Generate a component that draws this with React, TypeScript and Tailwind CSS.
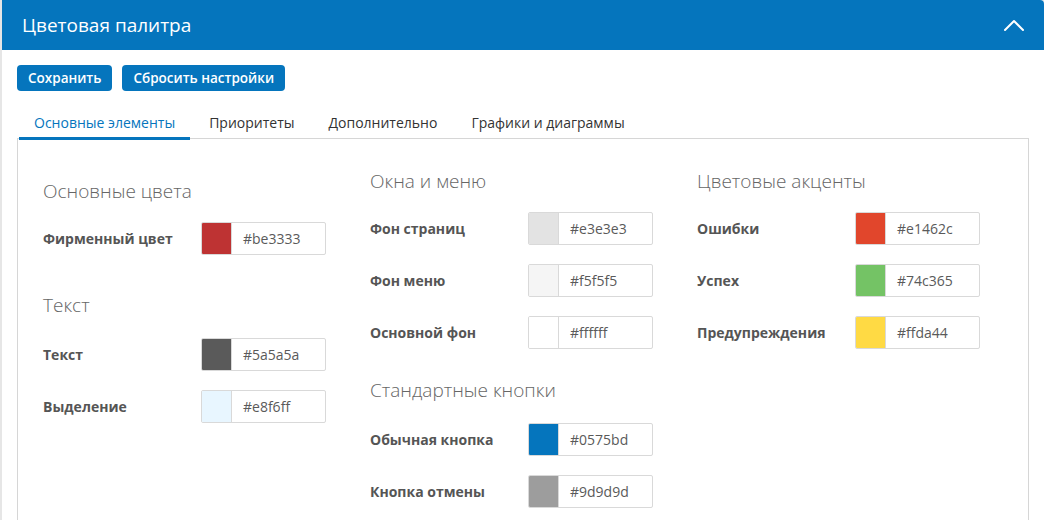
import React from 'react';

type Field = { label: string; color: string };

const font = { fontFamily: '"Open Sans", "Noto Sans", sans-serif' };

const ColorRow: React.FC<Field & { className?: string }> = ({ label, color, className = '' }) => (
  <div className={`flex items-center ${className}`}>
    <div className="w-[158px] text-[14px] font-bold text-[#555]">{label}</div>
    <div className="flex h-[33px] w-[125px] overflow-hidden rounded-[2px] border border-[#d9d9d9] bg-white">
      <div className="w-[30px] shrink-0 border-r border-[#d9d9d9]" style={{ backgroundColor: color }} />
      <div className="flex items-center pl-[11px] text-[14px] text-[#5a5a5a]">{color}</div>
    </div>
  </div>
);

const Heading: React.FC<{ children: React.ReactNode; className?: string }> = ({ children, className = '' }) => (
  <h3 className={`text-[19px] font-light leading-[24px] text-[#666] ${className}`}>{children}</h3>
);

const tabs = ['Основные элементы', 'Приоритеты', 'Дополнительно', 'Графики и диаграммы'];

export default function App() {
  return (
    <div className="min-h-screen bg-[#e6e6e6] pl-[2px]" style={font}>
      <div className="min-h-[520px] overflow-hidden rounded-tr-[4px] bg-white">
        {/* Header */}
        <div className="flex h-[50px] items-center justify-between bg-[#0575bd] pl-[20px] pr-[19px]">
          <h2 className="text-[19px] text-white">Цветовая палитра</h2>
          <svg width="22" height="14" viewBox="0 0 22 14" fill="none">
            <polyline points="2,12 11,3 20,12" stroke="white" strokeWidth="2" strokeLinecap="round" strokeLinejoin="round" />
          </svg>
        </div>

        <div className="px-[15px] pt-[15px]">
          {/* Actions */}
          <div className="flex gap-[10px]">
            <button className="h-[26px] rounded-[4px] bg-[#0575bd] px-[11px] text-[13.5px] font-semibold text-white">
              Сохранить
            </button>
            <button className="h-[26px] rounded-[4px] bg-[#0575bd] px-[11px] text-[13.5px] font-semibold text-white">
              Сбросить настройки
            </button>
          </div>

          {/* Tabs */}
          <div className="mt-[17px] flex pl-[2px]">
            {tabs.map((t, i) => (
              <div
                key={t}
                className={`relative -mb-[2px] mr-[4px] px-[15px] pb-[4px] pt-[5px] text-[14px] leading-[20px] ${
                  i === 0 ? 'border-b-[3px] border-[#0575bd] text-[#0575bd]' : 'border-b-[3px] border-transparent text-[#333]'
                }`}
              >
                {t}
              </div>
            ))}
          </div>

          {/* Tab content */}
          <div className="flex min-h-[400px] border border-[#d6d6d6] pl-[25px] pt-[30px]">
            <div className="w-[327px]">
              <Heading className="mt-[10px] mb-[19px]">Основные цвета</Heading>
              <ColorRow label="Фирменный цвет" color="#be3333" />
              <Heading className="mt-[38px] mb-[21px]">Текст</Heading>
              <ColorRow label="Текст" color="#5a5a5a" />
              <ColorRow label="Выделение" color="#e8f6ff" className="mt-[19px]" />
            </div>
            <div className="w-[327px]">
              <Heading className="mb-[19px]">Окна и меню</Heading>
              <ColorRow label="Фон страниц" color="#e3e3e3" />
              <ColorRow label="Фон меню" color="#f5f5f5" className="mt-[19px]" />
              <ColorRow label="Основной фон" color="#ffffff" className="mt-[19px]" />
              <Heading className="mt-[29px] mb-[21px]">Стандартные кнопки</Heading>
              <ColorRow label="Обычная кнопка" color="#0575bd" />
              <ColorRow label="Кнопка отмены" color="#9d9d9d" className="mt-[19px]" />
            </div>
            <div className="w-[327px]">
              <Heading className="mb-[19px]">Цветовые акценты</Heading>
              <ColorRow label="Ошибки" color="#e1462c" />
              <ColorRow label="Успех" color="#74c365" className="mt-[19px]" />
              <ColorRow label="Предупреждения" color="#ffda44" className="mt-[19px]" />
            </div>
          </div>
        </div>
      </div>
    </div>
  );
}
